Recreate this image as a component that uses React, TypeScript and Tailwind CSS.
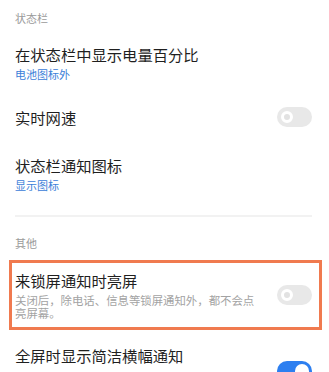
import React from 'react'

function Toggle({ on = false }: { on?: boolean }) {
  return (
    <div
      className={
        on
          ? 'flex h-[20px] w-[35px] shrink-0 items-center justify-end rounded-full bg-[#2d7ff0] px-[3px]'
          : 'flex h-[20px] w-[35px] shrink-0 items-center rounded-full bg-[#e8e8e8] px-[4px]'
      }
    >
      <div
        className={
          on
            ? 'h-[14px] w-[14px] rounded-full bg-white'
            : 'h-[12px] w-[12px] rounded-full border-[3px] border-white bg-[#e2e2e2]'
        }
      />
    </div>
  )
}

export default function App() {
  return (
    <div
      className="relative h-[372px] w-[329px] overflow-hidden bg-white"
      style={{ fontFamily: '"Noto Sans CJK SC", "Noto Sans", sans-serif' }}
    >
      {/* 状态栏 section */}
      <div className="px-[15px] pt-[11px] text-[11px] leading-[14px] text-[#9a9a9a]">状态栏</div>

      <div className="mt-[20px] px-[15px]">
        <div className="text-[15.3px] leading-[18px] text-[#1f1f1f]">在状态栏中显示电量百分比</div>
        <div className="mt-[4px] text-[11px] leading-[14px] text-[#3b80d8]">电池图标外</div>
      </div>

      <div className="mt-[26px] flex items-center justify-between pl-[15px] pr-[17px]">
        <div className="text-[15.3px] leading-[18px] text-[#1f1f1f]">实时网速</div>
        <Toggle />
      </div>

      <div className="mt-[29px] px-[15px]">
        <div className="text-[15.3px] leading-[18px] text-[#1f1f1f]">状态栏通知图标</div>
        <div className="mt-[4px] text-[11px] leading-[14px] text-[#3b80d8]">显示图标</div>
      </div>

      <div className="mx-[15px] mt-[23px] mr-[17px] h-[2px] bg-[#f2f2f2]" />

      {/* 其他 section */}
      <div className="mt-[19px] px-[15px] text-[11px] leading-[14px] text-[#9a9a9a]">其他</div>

      <div className="ml-[9px] mr-[7px] mt-[10px] flex h-[70px] items-center border-[3px] border-[#f07a4f] pl-[3px] pr-[7px]">
        <div className="flex-1">
          <div className="text-[15.3px] leading-[18px] text-[#1f1f1f]">来锁屏通知时亮屏</div>
          <div className="mt-[5px] w-[245px] text-[11.4px] leading-[13px] text-[#a3a3a3]">
            关闭后，除电话、信息等锁屏通知外，都不会点亮屏幕。
          </div>
        </div>
        <Toggle />
      </div>

      <div className="mt-[16px] flex items-start justify-between pl-[15px] pr-[17px]">
        <div className="text-[15.3px] leading-[18px] text-[#1f1f1f]">全屏时显示简洁横幅通知</div>
      </div>
      <div className="mt-[-3px] flex justify-end pr-[17px]">
        <Toggle on />
      </div>
    </div>
  )
}
